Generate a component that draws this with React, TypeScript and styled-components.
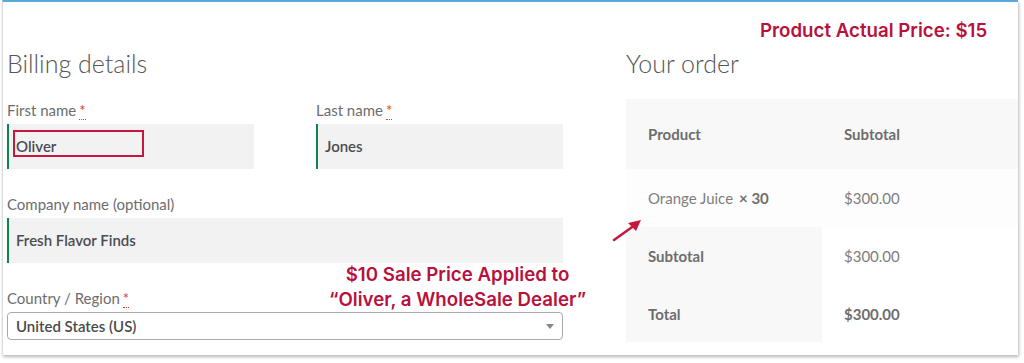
import styled, { createGlobalStyle } from "styled-components";

const GlobalStyle = createGlobalStyle`
  body {
    margin: 0;
    background: #ffffff;
    font-family: "Lato", "Liberation Sans", sans-serif;
  }
`;

const Page = styled.div`
  width: 1024px;
  height: 363px;
  overflow: hidden;
  padding: 0 6px 0 2px;
  box-sizing: border-box;
`;

const Card = styled.div`
  position: relative;
  height: 355px;
  box-sizing: border-box;
  border-top: 2px solid #55a9dc;
  border-left: 1px solid #dcdcdc;
  box-shadow: 1px 2px 3px rgba(0, 0, 0, 0.28);
  padding: 0 0 0 4px;
  display: grid;
  grid-template-columns: 556px 1fr;
  column-gap: 63px;
  overflow: hidden;
`;

const Column = styled.div`
  padding-top: 44px;
`;

const Heading = styled.h3`
  margin: 0;
  font-size: 25px;
  line-height: 34px;
  font-weight: 300;
  color: #555555;
`;

const FieldRow = styled.div`
  display: grid;
  grid-template-columns: 1fr 1fr;
  column-gap: 62px;
  margin-top: 20px;
`;

const Field = styled.div<{ $gap?: number }>`
  margin-top: ${(p) => p.$gap ?? 0}px;
`;

const Label = styled.label`
  display: block;
  font-size: 15px;
  line-height: 20px;
  color: #6d6d6d;
  margin-bottom: 4px;
`;

const Required = styled.abbr`
  color: #e2401c;
  text-decoration: none;
  border-bottom: 1px dotted #e2401c;
  margin-left: 3px;
  line-height: 1;
`;

const TextBox = styled.div`
  position: relative;
  height: 45px;
  box-sizing: border-box;
  background: #f2f2f2;
  border-left: 2px solid #0f834d;
  padding: 0 0 1px 7px;
  display: flex;
  align-items: center;
  font-size: 15px;
  font-weight: 600;
  color: #4a4c52;
`;

const Highlight = styled.span`
  position: absolute;
  left: 4px;
  top: 6px;
  width: 131px;
  height: 27px;
  box-sizing: border-box;
  border: 2px solid #c8173f;
`;

const Select = styled.div`
  height: 28px;
  box-sizing: border-box;
  border: 1px solid #aaaaaa;
  border-radius: 4px;
  background: #ffffff;
  padding: 0 8px;
  display: flex;
  align-items: center;
  justify-content: space-between;
  font-size: 15px;
  font-weight: 600;
  color: #4a4a4a;
`;

const Caret = styled.span`
  width: 0;
  height: 0;
  border-left: 4px solid transparent;
  border-right: 4px solid transparent;
  border-top: 5px solid #888888;
`;

const OrderTable = styled.table`
  margin-top: 19px;
  width: 100%;
  border-collapse: collapse;
  font-size: 15px;
  color: #6d6d6d;
  table-layout: fixed;
`;

const HeadRow = styled.tr`
  background: #f8f8f8;
  height: 70px;
`;

const ItemRow = styled.tr`
  background: #fdfdfd;
  height: 58px;
`;

const FootRow = styled.tr<{ $h: number }>`
  height: ${(p) => p.$h}px;
`;

const Cell = styled.td<{ $bold?: boolean; $shade?: boolean }>`
  padding: 0 0 0 22px;
  text-align: left;
  vertical-align: middle;
  font-weight: ${(p) => (p.$bold ? 700 : 400)};
  color: ${(p) => (p.$bold ? "#6d6d6d" : "#7d7d7d")};
  background: ${(p) => (p.$shade ? "#f8f8f8" : "transparent")};
`;

const Qty = styled.strong`
  font-weight: 700;
  color: #6d6d6d;
  margin-left: 6px;
`;

const Note = styled.div<{ $left: number; $top: number }>`
  position: absolute;
  left: ${(p) => p.$left}px;
  top: ${(p) => p.$top}px;
  font-family: "Inter", "Liberation Sans", sans-serif;
  font-size: 18.7px;
  line-height: 25px;
  font-weight: 600;
  color: #b8123c;
  text-align: center;
  white-space: nowrap;
`;

const ArrowMark = styled.svg`
  position: absolute;
  left: 606px;
  top: 212px;
`;

export default function App() {
  return (
    <Page>
      <GlobalStyle />
      <Card>
        <Column>
          <Heading>Billing details</Heading>
          <FieldRow>
            <Field>
              <Label>
                First name<Required title="required">*</Required>
              </Label>
              <TextBox>
                Oliver
                <Highlight />
              </TextBox>
            </Field>
            <Field>
              <Label>
                Last name<Required title="required">*</Required>
              </Label>
              <TextBox>Jones</TextBox>
            </Field>
          </FieldRow>
          <Field $gap={25}>
            <Label>Company name (optional)</Label>
            <TextBox>Fresh Flavor Finds</TextBox>
          </Field>
          <Field $gap={25}>
            <Label>
              Country / Region<Required title="required">*</Required>
            </Label>
            <Select>
              United States (US)
              <Caret />
            </Select>
          </Field>
        </Column>

        <Column>
          <Heading>Your order</Heading>
          <OrderTable>
            <tbody>
              <HeadRow>
                <Cell $bold>Product</Cell>
                <Cell $bold>Subtotal</Cell>
              </HeadRow>
              <ItemRow>
                <Cell>
                  Orange Juice<Qty>× 30</Qty>
                </Cell>
                <Cell>$300.00</Cell>
              </ItemRow>
              <FootRow $h={58}>
                <Cell $bold $shade>
                  Subtotal
                </Cell>
                <Cell>$300.00</Cell>
              </FootRow>
              <FootRow $h={57}>
                <Cell $bold $shade>
                  Total
                </Cell>
                <Cell $bold>$300.00</Cell>
              </FootRow>
            </tbody>
          </OrderTable>
        </Column>

        <Note $left={757} $top={16}>
          Product Actual Price: $15
        </Note>
        <Note $left={326} $top={260}>
          $10 Sale Price Applied to
          <br />
          “Oliver, a WholeSale Dealer”
        </Note>
        <ArrowMark width="36" height="30" viewBox="0 0 36 30">
          <line x1="5" y1="26" x2="26" y2="11" stroke="#c8173f" strokeWidth="2.5" strokeLinecap="round" />
          <polygon points="32,6 19,9 27,17" fill="#c8173f" />
        </ArrowMark>
      </Card>
    </Page>
  );
}
